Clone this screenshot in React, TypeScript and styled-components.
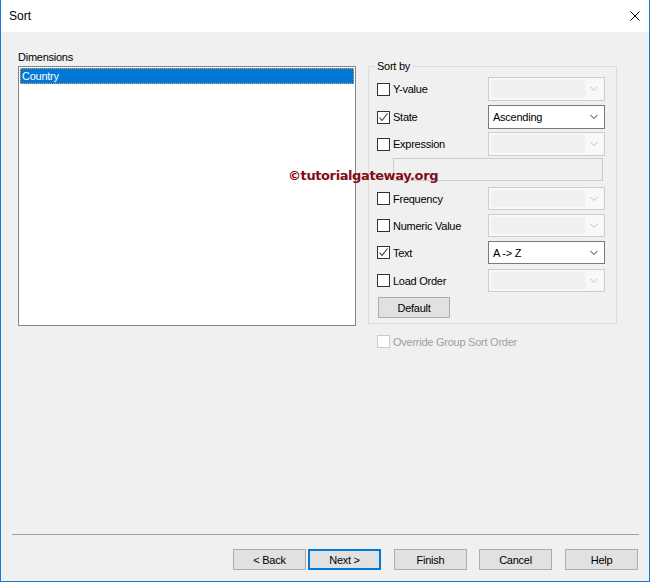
import * as React from 'react';
import styled, { createGlobalStyle } from 'styled-components';

const GlobalStyle = createGlobalStyle`
  html, body {
    margin: 0;
    padding: 0;
    width: 650px;
    height: 582px;
    overflow: hidden;
    background: #f0f0f0;
  }
  body {
    font-family: "Liberation Sans", Arial, sans-serif;
    font-size: 11px;
    letter-spacing: -0.25px;
    color: #000;
  }
`;

const Window = styled.div`
  position: relative;
  width: 650px;
  height: 582px;
  box-sizing: border-box;
  border: 1px solid #1979d3;
  border-top: none;
  background: #f0f0f0;
  display: flex;
  flex-direction: column;
`;

const TitleBar = styled.div`
  height: 32px;
  background: #fff;
  display: flex;
  align-items: center;
  padding-left: 8px;
  font-size: 12px;
  letter-spacing: 0;
  flex-shrink: 0;
`;

const CloseIcon = styled.svg`
  margin-left: auto;
  margin-right: 9px;
`;

const Body = styled.div`
  flex: 1;
  display: flex;
  flex-direction: column;
`;

const Main = styled.div`
  display: flex;
  padding-left: 17px;
`;

const LeftColumn = styled.div`
  margin-top: 19px;
  width: 338px;
`;

const Label = styled.div`
  line-height: 13px;
  margin-bottom: 2px;
`;

const ListBox = styled.div`
  height: 260px;
  box-sizing: border-box;
  border: 1px solid #828790;
  background: #fff;
  padding: 1px;
`;

const ListItem = styled.div<{ $selected?: boolean }>`
  height: 16px;
  box-sizing: border-box;
  line-height: 14px;
  padding-left: 1px;
  background: ${(p) => (p.$selected ? '#0078d7' : 'transparent')};
  color: ${(p) => (p.$selected ? '#fff' : '#000')};
  border: 1px dotted ${(p) => (p.$selected ? '#e7a24a' : 'transparent')};
`;

const RightColumn = styled.div`
  margin-left: 12px;
  margin-top: 27px;
  width: 249px;
`;

const GroupBox = styled.fieldset`
  margin: 0;
  padding: 0 0 5px 8px;
  border: 1px solid #dcdcdc;
  box-sizing: border-box;
  width: 249px;
`;

const Legend = styled.legend`
  padding: 0 2px;
  margin-left: -2px;
  line-height: 14px;
`;

const Row = styled.div<{ $mt: number; $h?: number }>`
  display: grid;
  grid-template-columns: 111px 117px;
  align-items: center;
  height: ${(p) => p.$h ?? 24}px;
  margin-top: ${(p) => p.$mt}px;
`;

const CheckLabel = styled.label<{ $disabled?: boolean }>`
  display: flex;
  align-items: center;
  gap: 3px;
  color: ${(p) => (p.$disabled ? '#a0a0a0' : '#000')};
`;

const Box = styled.span<{ $disabled?: boolean }>`
  width: 13px;
  height: 13px;
  box-sizing: border-box;
  border: 1px solid ${(p) => (p.$disabled ? '#cccccc' : '#333')};
  background: #fff;
  display: flex;
  align-items: center;
  justify-content: center;
`;

const Combo = styled.div<{ $enabled?: boolean }>`
  height: 100%;
  box-sizing: border-box;
  border: 1px solid ${(p) => (p.$enabled ? '#7a7a7a' : '#cccccc')};
  background: ${(p) => (p.$enabled ? '#fff' : '#f8f8f8')};
  display: flex;
  align-items: center;
  padding: ${(p) => (p.$enabled ? '0 0 0 4px' : '2px 0 2px 2px')};
`;

const ComboText = styled.div`
  flex: 1;
`;

const ComboField = styled.div`
  flex: 1;
  align-self: stretch;
  background: #f0f0f0;
`;

const Arrow = styled.svg`
  width: 19px;
  flex-shrink: 0;
`;

const TextField = styled.div`
  margin-top: 2px;
  margin-left: 16px;
  width: 210px;
  height: 23px;
  box-sizing: border-box;
  border: 1px solid #cccccc;
  background: #f0f0f0;
`;

const PushButton = styled.button<{ $ml?: number; $focused?: boolean; $w?: number; $mt?: number }>`
  width: ${(p) => p.$w ?? 73}px;
  height: 21px;
  margin: ${(p) => p.$mt ?? 0}px 0 0 ${(p) => p.$ml ?? 0}px;
  padding: 0;
  box-sizing: border-box;
  font-family: "Liberation Sans", Arial, sans-serif;
  font-size: 11px;
  letter-spacing: -0.25px;
  color: #000;
  background: #e1e1e1;
  border: 1px solid ${(p) => (p.$focused ? '#0078d7' : '#adadad')};
  box-shadow: ${(p) => (p.$focused ? 'inset 0 0 0 1px #0078d7' : 'none')};
  display: block;
`;

const OverrideRow = styled.div`
  margin-top: 11px;
  padding-left: 9px;
`;

const Footer = styled.div`
  margin-top: auto;
  padding-bottom: 11px;
`;

const Separator = styled.div`
  margin: 0 10px 14px 11px;
  border-top: 1px solid #a0a0a0;
`;

const ButtonRow = styled.div`
  display: flex;
  justify-content: flex-end;
  padding-right: 11px;
`;

const Watermark = styled.div`
  position: absolute;
  left: 287px;
  top: 168px;
  font-family: "DejaVu Sans", Verdana, sans-serif;
  font-weight: bold;
  font-size: 13px;
  letter-spacing: -0.4px;
  color: #820c17;
  white-space: nowrap;
`;

const Check = () => (
  <svg width="11" height="11" viewBox="0 0 11 11">
    <polyline points="1.5,5.5 4,8.5 9.5,1.5" fill="none" stroke="#333" strokeWidth="1.1" />
  </svg>
);

const Chevron: React.FC<{ enabled?: boolean }> = ({ enabled }) => (
  <Arrow height="6" viewBox="0 0 19 6">
    <polyline
      points="5.5,1 9,4.5 12.5,1"
      fill="none"
      stroke={enabled ? '#333' : '#bfbfbf'}
      strokeWidth="1"
    />
  </Arrow>
);

type SortOption = {
  label: string;
  checked?: boolean;
  value?: string;
  mt: number;
  h?: number;
};

const options: SortOption[] = [
  { label: 'Y-value', mt: 4 },
  { label: 'State', checked: true, value: 'Ascending', mt: 4 },
  { label: 'Expression', mt: 3 },
  { label: 'Frequency', mt: 6, h: 23 },
  { label: 'Numeric Value', mt: 4, h: 23 },
  { label: 'Text', checked: true, value: 'A -> Z', mt: 4, h: 23 },
  { label: 'Load Order', mt: 5, h: 23 },
];

const SortRow: React.FC<{ option: SortOption }> = ({ option }) => (
  <Row $mt={option.mt} $h={option.h}>
    <CheckLabel>
      <Box>{option.checked && <Check />}</Box>
      {option.label}
    </CheckLabel>
    <Combo $enabled={option.checked}>
      {option.checked ? <ComboText>{option.value}</ComboText> : <ComboField />}
      <Chevron enabled={option.checked} />
    </Combo>
  </Row>
);

const App: React.FC = () => {
  return (
    <>
      <GlobalStyle />
      <Window>
        <TitleBar>
          Sort
          <CloseIcon width="10" height="10" viewBox="0 0 10 10">
            <path d="M0.5 0.5 L9.5 9.5 M9.5 0.5 L0.5 9.5" stroke="#000" strokeWidth="1" />
          </CloseIcon>
        </TitleBar>
        <Body>
          <Main>
            <LeftColumn>
              <Label>Dimensions</Label>
              <ListBox>
                <ListItem $selected>Country</ListItem>
              </ListBox>
            </LeftColumn>
            <RightColumn>
              <GroupBox>
                <Legend>Sort by</Legend>
                {options.slice(0, 3).map((o) => (
                  <SortRow key={o.label} option={o} />
                ))}
                <TextField />
                {options.slice(3).map((o) => (
                  <SortRow key={o.label} option={o} />
                ))}
                <PushButton $w={72} $mt={5} $ml={1}>Default</PushButton>
              </GroupBox>
              <OverrideRow>
                <CheckLabel $disabled>
                  <Box $disabled />
                  Override Group Sort Order
                </CheckLabel>
              </OverrideRow>
            </RightColumn>
          </Main>
          <Footer>
            <Separator />
            <ButtonRow>
              <PushButton>&lt; Back</PushButton>
              <PushButton $ml={2} $focused>Next &gt;</PushButton>
              <PushButton $ml={13}>Finish</PushButton>
              <PushButton $ml={12}>Cancel</PushButton>
              <PushButton $ml={13}>Help</PushButton>
            </ButtonRow>
          </Footer>
        </Body>
        <Watermark>©tutorialgateway.org</Watermark>
      </Window>
    </>
  );
};

export default App;
